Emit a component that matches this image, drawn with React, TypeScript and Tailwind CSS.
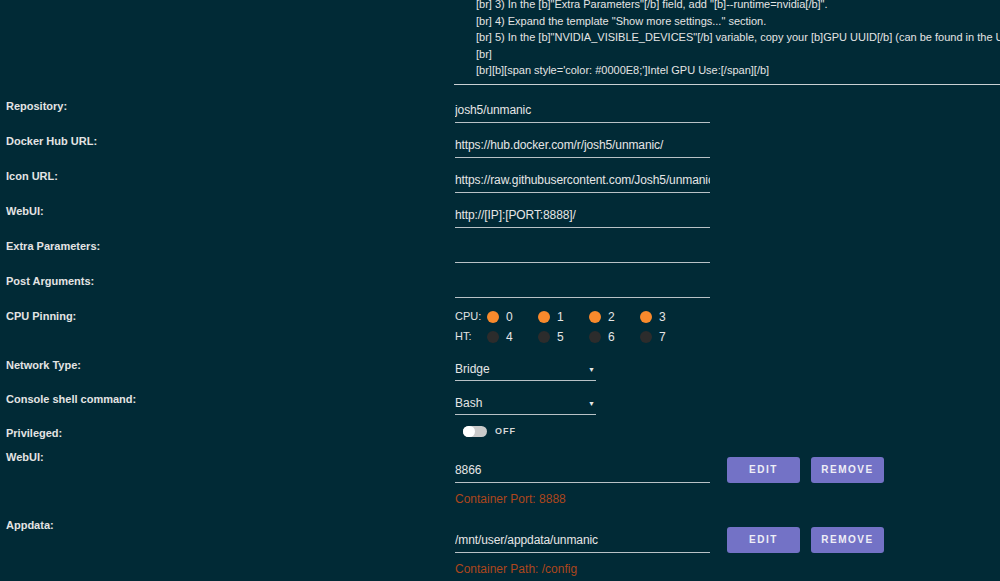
import React from 'react';

const FONT = { fontFamily: '"Liberation Sans", Arial, sans-serif' };

const DESC_LINES = [
  '[br] 3) In the [b]"Extra Parameters"[/b] field, add "[b]--runtime=nvidia[/b]".',
  '[br] 4) Expand the template "Show more settings..." section.',
  '[br] 5) In the [b]"NVIDIA_VISIBLE_DEVICES"[/b] variable, copy your [b]GPU UUID[/b] (can be found in the Unraid Nvidia Plugin)',
  '[br]',
  "[br][b][span style='color: #0000E8;']Intel GPU Use:[/span][/b]",
];

const TEXT_FIELDS = [
  { label: 'Repository:', value: 'josh5/unmanic' },
  { label: 'Docker Hub URL:', value: 'https://hub.docker.com/r/josh5/unmanic/' },
  { label: 'Icon URL:', value: 'https://raw.githubusercontent.com/Josh5/unmanic/master/icon.png' },
  { label: 'WebUI:', value: 'http://[IP]:[PORT:8888]/' },
  { label: 'Extra Parameters:', value: '' },
  { label: 'Post Arguments:', value: '' },
];

function Label({ children }: { children: React.ReactNode }) {
  return (
    <div className="w-[449px] shrink-0 text-[11px] font-bold leading-4 text-[#e4e4e4]">{children}</div>
  );
}

function TextInput({ value, className = '' }: { value: string; className?: string }) {
  return (
    <div
      className={`h-[26px] w-[255px] overflow-hidden whitespace-nowrap border-b border-[#b9c2c6] text-[12px] leading-[27px] tracking-[-0.1px] text-[#e6e6e6] ${className}`}
    >
      {value}
    </div>
  );
}

function Select({ value }: { value: string }) {
  return (
    <div className="flex h-[25px] w-[141px] items-center justify-between border-b border-[#b9c2c6] pt-[3px] text-[12px] text-[#e6e6e6]">
      <span>{value}</span>
      <span className="mr-[1px] text-[7px] leading-none">▼</span>
    </div>
  );
}

function Cpu({ n, on }: { n: number; on: boolean }) {
  return (
    <div className="flex w-[51px] items-center gap-[7px]">
      <span className={`h-[12px] w-[12px] rounded-full ${on ? 'bg-[#f98a2c]' : 'bg-[#2c2c2c]'}`}></span>
      <span className="text-[12px] text-[#e6e6e6]">{n}</span>
    </div>
  );
}

function Btn({ children }: { children: React.ReactNode }) {
  return (
    <button className="h-[26px] w-[73px] rounded-[3px] bg-[#7372c6] text-[10px] font-bold tracking-[1.5px] text-[#eeeef6]">
      {children}
    </button>
  );
}

function PathRow({ label, value, note, top }: { label: string; value: string; note: string; top: string }) {
  return (
    <div className="flex">
      <Label>{label}</Label>
      <div className={top}>
        <div className="flex items-center">
          <TextInput value={value} />
          <div className="ml-[17px] flex gap-[11px]">
            <Btn>EDIT</Btn>
            <Btn>REMOVE</Btn>
          </div>
        </div>
        <div className="mt-[8px] text-[12px] leading-4 text-[#ad461c]">{note}</div>
      </div>
    </div>
  );
}

export default function App() {
  return (
    <div className="h-[581px] w-[1000px] overflow-hidden bg-[#012a36] pl-[6px]" style={FONT}>
      {/* template description tail */}
      <div className="ml-[448px]">
        <div className="-mt-[4px] pl-[22px] text-[11px] leading-[16.5px] text-[#e4e4e4]">
          {DESC_LINES.map((l, i) => (
            <div key={i} className="whitespace-nowrap">
              {l}
            </div>
          ))}
        </div>
        <div className="mt-[5px] border-t border-[#c9d0d3]"></div>
      </div>

      <div className="mt-[12px]">
        {TEXT_FIELDS.map((f) => (
          <div key={f.label} className="flex h-[35px]">
            <Label>
              <div className="pt-[1px]">{f.label}</div>
            </Label>
            <TextInput value={f.value} />
          </div>
        ))}

        {/* CPU pinning */}
        <div className="flex h-[49px]">
          <Label>
            <div className="pt-[1px]">CPU Pinning:</div>
          </Label>
          <div className="text-[11px] text-[#e4e4e4]">
            <div className="flex h-[20px] items-center">
              <span className="w-[32px]">CPU:</span>
              {[0, 1, 2, 3].map((n) => (
                <Cpu key={n} n={n} on />
              ))}
            </div>
            <div className="flex h-[20px] items-center">
              <span className="w-[32px]">HT:</span>
              {[4, 5, 6, 7].map((n) => (
                <Cpu key={n} n={n} on={false} />
              ))}
            </div>
          </div>
        </div>

        <div className="flex h-[34px]">
          <Label>
            <div className="pt-[1px]">Network Type:</div>
          </Label>
          <Select value="Bridge" />
        </div>

        <div className="flex h-[34px]">
          <Label>
            <div className="pt-[1px]">Console shell command:</div>
          </Label>
          <Select value="Bash" />
        </div>

        <div className="flex h-[25px]">
          <Label>
            <div className="pt-[1px]">Privileged:</div>
          </Label>
          <div className="flex items-start pl-[8px] pt-[2px]">
            <div className="flex h-[11px] w-[24px] items-center rounded-full bg-[#cacaca]">
              <span className="h-[11px] w-[12px] rounded-full bg-white"></span>
            </div>
            <span className="ml-[8px] text-[9px] font-bold leading-[11px] tracking-[1px] text-[#d6d6d6]">OFF</span>
          </div>
        </div>

        <div className="flex flex-col gap-[10px]">
          <PathRow label="WebUI:" value="8866" note="Container Port: 8888" top="pt-[8px]" />
          <PathRow label="Appdata:" value="/mnt/user/appdata/unmanic" note="Container Path: /config" top="pt-[10px]" />
        </div>
      </div>
    </div>
  );
}
